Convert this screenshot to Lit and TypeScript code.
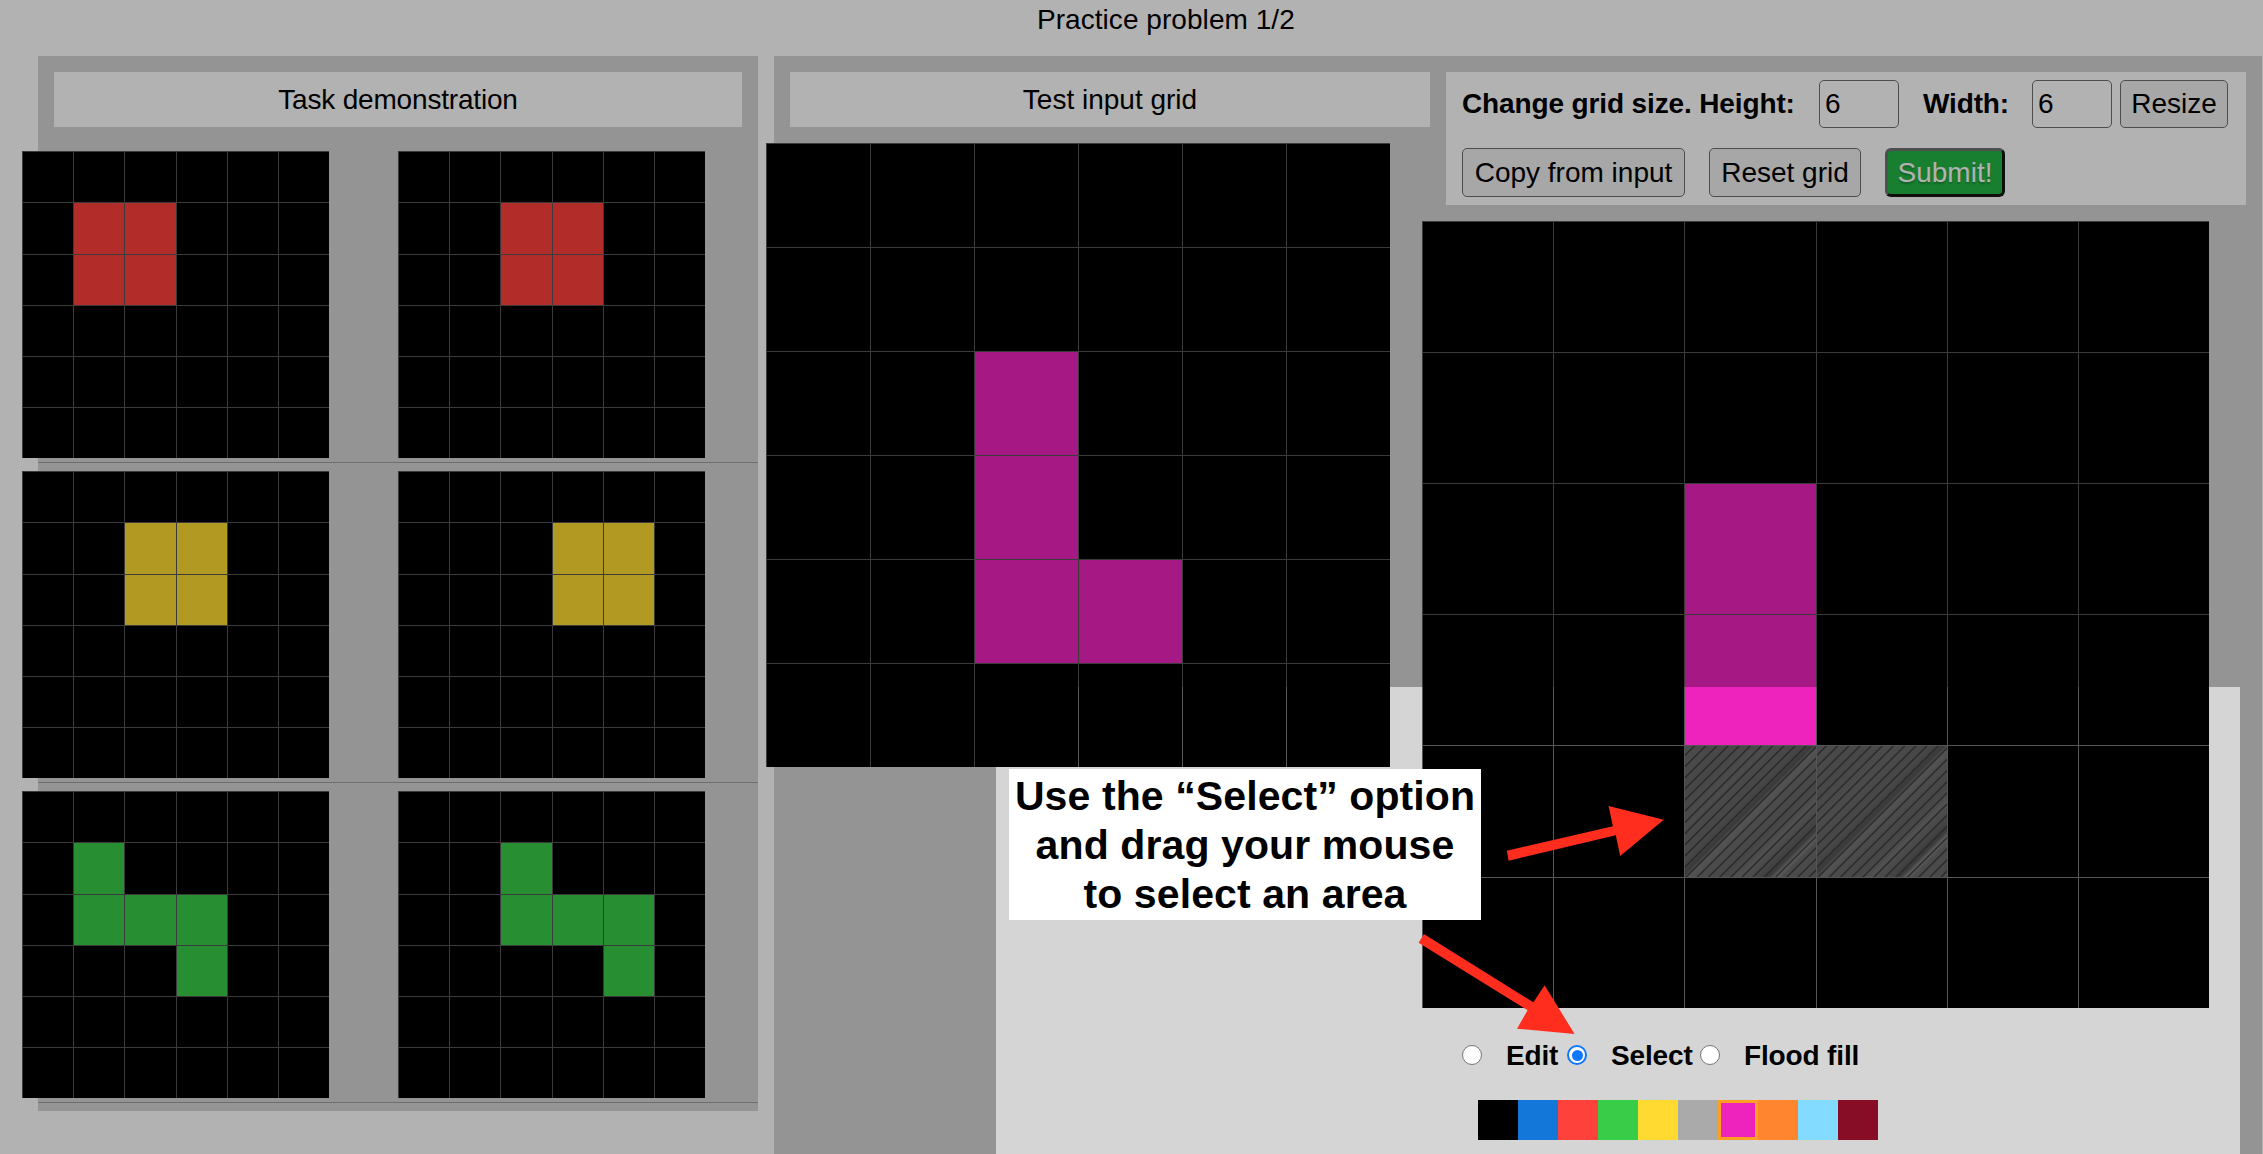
import { LitElement, html, css, svg, nothing } from "lit";
import { customElement, property } from "lit/decorators.js";
import { classMap } from "lit/directives/class-map.js";

const COLORS = ["black", "blue", "red", "green", "yellow", "gray", "magenta", "orange", "sky", "maroon"];

const symbolStyles = css`
  .black { background: #000; }
  .blue { background: #1377d9; }
  .red { background: #ff413c; }
  .green { background: #39cc48; }
  .yellow { background: #ffdb32; }
  .gray { background: #aaa; }
  .magenta { background: #ee23bd; }
  .orange { background: #ff862e; }
  .sky { background: #83dcff; }
  .maroon { background: #860d25; }
`;

@customElement("cell-grid")
class CellGrid extends LitElement {
  @property() rows = "";
  @property({ type: Array }) selected: number[] = [];

  static styles = [
    symbolStyles,
    css`
      :host { display: block; }
      .grid {
        display: grid;
        width: 100%;
        height: 100%;
        grid-template-rows: var(--grid-rows, repeat(6, 1fr));
        grid-template-columns: var(--grid-columns, repeat(6, 1fr));
      }
      .cell {
        box-sizing: border-box;
        border-top: 1px solid #555;
        border-left: 1px solid #555;
      }
      .selected {
        background:
          repeating-linear-gradient(135deg, transparent 0 5.4px, #2a2a2a 6.4px, #2a2a2a 6.8px, transparent 7.9px),
          linear-gradient(135deg, #4b4b4b 0%, #474747 20%, #4b4b4b 30%, #464646 44%, #3a3a3a 48.5%, #535353 51%, #4b4b4b 56%, #464646 65%, #505050 71%, #464646 77%, #3a3a3a 82%, #606060 84.5%, #4b4b4b 87%, #484848 100%);
      }
    `,
  ];

  render() {
    const cells = this.rows.replace(/\s/g, "").split("");
    return html`<div class="grid">
      ${cells.map((c, i) => {
        const sel = this.selected.includes(i);
        return html`<div class=${classMap({ cell: true, selected: sel, [COLORS[+c]]: !sel })}></div>`;
      })}
    </div>`;
  }
}

const PAIRS = [
  ["000000 022000 022000 000000 000000 000000", "000000 002200 002200 000000 000000 000000"],
  ["000000 004400 004400 000000 000000 000000", "000000 000440 000440 000000 000000 000000"],
  ["000000 030000 033300 000300 000000 000000", "000000 003000 003330 000030 000000 000000"],
];

@customElement("app-root")
class AppRoot extends LitElement {
  static styles = [
    symbolStyles,
    css`
      :host {
        display: block;
        position: relative;
        width: 2263px;
        height: 1154px;
        overflow: hidden;
        background: #fff;
        color: #000;
        font-family: "Liberation Sans", Arial, sans-serif;
        font-size: 28px;
        line-height: 32px;
      }
      .title { height: 56px; padding: 4px 0 0 1037px; box-sizing: border-box; white-space: nowrap; letter-spacing: 0.05px; }
      .columns { display: flex; gap: 16px; padding-left: 38px; align-items: flex-start; }
      .panel { background: #d5d5d5; box-sizing: border-box; }
      .demo { width: 720px; height: 1055px; padding-top: 16px; }
      .work { width: 1488px; height: 1098px; padding: 16px; display: flex; gap: 16px; }
      .heading {
        height: 55px;
        background: #fff;
        display: flex;
        align-items: center;
        justify-content: center;
        padding-top: 1px;
        box-sizing: border-box;
      }
      .demo .heading { margin: 0 16px 24px; letter-spacing: -0.18px; }
      .pair {
        display: flex;
        gap: 69px;
        height: 312px;
        box-sizing: border-box;
        border-bottom: 1px solid #9f9f9f;
        margin-bottom: 8px;
      }
      .pair cell-grid {
        width: 307px;
        height: 307px;
        flex: none;
        --grid-rows: 51px 52px 51px 51px 51px 51px;
        --grid-columns: 51px 51px 52px 51px 51px 51px;
      }
      .pair cell-grid:first-child { margin-left: -16px; }
      .input-col { width: 640px; flex: none; }
      .input-col cell-grid { width: 624px; height: 624px; margin: 16px 0 0 -24px; }
      .output-col { width: 800px; flex: none; }
      .output-col cell-grid {
        width: 787px;
        height: 787px;
        margin: 16px 0 0 -24px;
        --grid-rows: 131px 131px 131px 131px 132px 131px;
        --grid-columns: 131px 131px 132px 131px 131px 131px;
      }
      .controls {
        height: 133px;
        box-sizing: border-box;
        padding: 8px 16px;
        background: #fff;
        display: flex;
        flex-direction: column;
        gap: 20px;
      }
      .row { display: flex; height: 48px; align-items: center; white-space: nowrap; }
      .row + .row { height: 49px; gap: 24px; }
      .label { font-weight: 700; letter-spacing: -0.13px; }
      .size-label { width: 357px; }
      .width-label { width: 109px; margin-left: 24px; }
      .field {
        width: 80px;
        height: 48px;
        box-sizing: border-box;
        border: 1px solid #6f6f6f;
        border-radius: 5px;
        padding: 7px 5px 0;
        line-height: 32px;
      }
      .button {
        height: 100%;
        box-sizing: border-box;
        border: 1px solid #6f6f6f;
        border-radius: 5px;
        background: #efefef;
        text-align: center;
        line-height: 47px;
      }
      .resize { width: 108px; margin-left: 8px; line-height: 46px; }
      .copy { width: 223px; }
      .reset { width: 152px; }
      .submit {
        width: 120px;
        color: #fff;
        background: #24b745;
        border: 3px solid;
        border-color: #717171 #161616 #161616 #717171;
        border-radius: 6px;
        line-height: 43px;
        text-shadow: 0 2px 2px rgba(0, 0, 0, 0.25);
      }
      .modes {
        display: flex;
        align-items: center;
        height: 32px;
        margin: 31px 0 0 16px;
        font-weight: 700;
        letter-spacing: -0.15px;
        white-space: nowrap;
      }
      .radio {
        width: 20px;
        height: 20px;
        box-sizing: border-box;
        border: 1px solid #767676;
        border-radius: 50%;
        background: #fff;
        flex: none;
      }
      .checked { border: 2px solid #1077ff; display: flex; align-items: center; justify-content: center; }
      .dot { width: 11px; height: 11px; border-radius: 50%; background: #1077ff; }
      .mode { display: flex; align-items: center; gap: 24px; }
      .mode-name { padding-top: 2px; }
      .edit { width: 105px; }
      .select { width: 133px; }
      .palette { display: flex; margin: 29px 0 0 32px; }
      .swatch { width: 40px; height: 40px; box-sizing: border-box; }
      .current { border: 3px solid #ffa022; }
      .spotlight {
        position: absolute;
        left: 996px;
        top: 687px;
        width: 1244px;
        height: 480px;
        box-shadow: 0 0 0 2400px rgba(0, 0, 0, 0.3);
      }
      .callout {
        position: absolute;
        left: 1009px;
        top: 769px;
        width: 472px;
        height: 151px;
        box-sizing: border-box;
        padding-top: 3px;
        background: #fff;
        font-size: 41px;
        letter-spacing: 0.1px;
        font-weight: 700;
        line-height: 49px;
        text-align: center;
        white-space: nowrap;
      }
      .arrows { position: absolute; left: 0; top: 0; width: 2263px; height: 1154px; }
    `,
  ];

  private mode(name: string, cls: string, checked = false) {
    return html`<div class="mode ${cls}">
      <span class=${classMap({ radio: true, checked })}>${checked ? html`<span class="dot"></span>` : nothing}</span>
      <span class="mode-name">${name}</span>
    </div>`;
  }

  render() {
    return html`
      <div class="title">Practice problem 1/2</div>
      <div class="columns">
        <div class="panel demo">
          <div class="heading">Task demonstration</div>
          ${PAIRS.map(([a, b]) => html`<div class="pair"><cell-grid rows=${a}></cell-grid><cell-grid rows=${b}></cell-grid></div>`)}
        </div>
        <div class="panel work">
          <div class="input-col">
            <div class="heading">Test input grid</div>
            <cell-grid rows="000000 000000 006000 006000 006600 000000"></cell-grid>
          </div>
          <div class="output-col">
            <div class="controls">
              <div class="row">
                <span class="label size-label">Change grid size. Height:</span>
                <span class="field">6</span>
                <span class="label width-label">Width:</span>
                <span class="field">6</span>
                <span class="button resize">Resize</span>
              </div>
              <div class="row">
                <span class="button copy">Copy from input</span>
                <span class="button reset">Reset grid</span>
                <span class="button submit">Submit!</span>
              </div>
            </div>
            <cell-grid rows="000000 000000 006000 006000 000000 000000" .selected=${[26, 27]}></cell-grid>
            <div class="modes">
              ${this.mode("Edit", "edit")} ${this.mode("Select", "select", true)} ${this.mode("Flood fill", "fill")}
            </div>
            <div class="palette">
              ${COLORS.map((c) => html`<div class=${classMap({ swatch: true, [c]: true, current: c === "magenta" })}></div>`)}
            </div>
          </div>
        </div>
      </div>
      <div class="spotlight"></div>
      <div class="callout">Use the “Select” option<br />and drag your mouse<br />to select an area</div>
      <svg class="arrows" viewBox="0 0 2263 1154" fill="#ff2d1e">
        ${svg`<polygon points="1506.8,850.7 1612.9,826.3 1608.6,806 1663.8,819.7 1620.2,856 1615.8,835.3 1508.7,860.7" />
        <polygon points="1423.9,934 1533.4,1002.3 1544.6,985.3 1574.6,1034 1517,1028.7 1527.6,1010.3 1418.6,942.7" />`}
      </svg>
    `;
  }
}
